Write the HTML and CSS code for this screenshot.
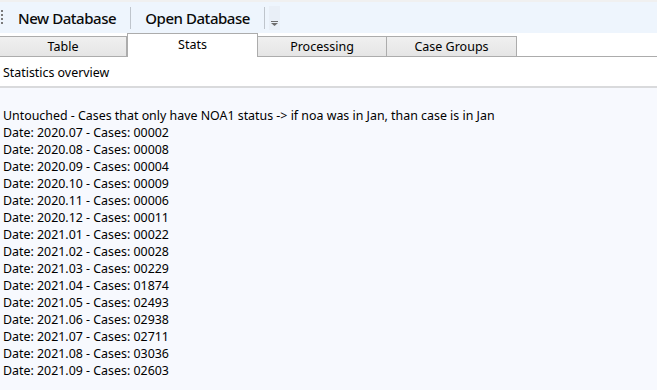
FILE: index.html
```html
<!DOCTYPE html>
<html lang="en">
<head>
    <meta charset="UTF-8">
    <title>Case Statistics</title>
    <link rel="stylesheet" href="styles.css">
</head>
<body>
    <div class="window">
        <div class="top-strip"></div>
        <div class="toolbar">
            <span class="grip"></span>
            <button class="tool-btn">New Database</button>
            <span class="tool-sep"></span>
            <button class="tool-btn">Open Database</button>
            <span class="tool-sep"></span>
            <span class="overflow">
                <svg width="7" height="5" viewBox="0 0 7 5"><rect x="0" y="0" width="7" height="1" fill="#6d6d6d"/><path d="M0 2h7L3.5 5z" fill="#6d6d6d"/></svg>
            </span>
        </div>

        <div class="tabs">
            <div class="tab">Table</div>
            <div class="tab active">Stats</div>
            <div class="tab">Processing</div>
            <div class="tab">Case Groups</div>
            <div class="tab-fill"></div>
        </div>

        <div class="panel-head">Statistics overview</div>

        <div class="stats" id="stats"></div>
    </div>

    <script>
        // Months with case counts, rendered as plain lines
        const rows = [
            ['2020.07', '00002'], ['2020.08', '00008'], ['2020.09', '00004'],
            ['2020.10', '00009'], ['2020.11', '00006'], ['2020.12', '00011'],
            ['2021.01', '00022'], ['2021.02', '00028'], ['2021.03', '00229'],
            ['2021.04', '01874'], ['2021.05', '02493'], ['2021.06', '02938'],
            ['2021.07', '02711'], ['2021.08', '03036'], ['2021.09', '02603']
        ];
        const stats = document.getElementById('stats');
        const lines = ['Untouched - Cases that only have NOA1 status -> if noa was in Jan, than case is in Jan'];
        rows.forEach(r => lines.push(`Date: ${r[0]} - Cases: ${r[1]}`));
        lines.forEach(text => {
            const div = document.createElement('div');
            div.className = 'stat-line';
            div.textContent = text;
            stats.appendChild(div);
        });
    </script>
</body>
</html>
```

FILE: styles.css
```css
body {
    margin: 0;
    font-family: "Noto Sans", "Open Sans", sans-serif;
    color: #000;
    background: #f7f9fe;
}
.window {
    width: 657px;
    height: 390px;
    display: flex;
    flex-direction: column;
    overflow: hidden;
}
.top-strip {
    height: 2px;
    background: #f0f0f0;
}
.toolbar {
    height: 31px;
    background: #eef5fd;
    display: flex;
    align-items: center;
}
.grip {
    width: 2px;
    height: 16px;
    margin: 0 6px 0 1px;
    background: repeating-linear-gradient(to bottom, #7a7a7a 0 2px, transparent 2px 4px);
}
.tool-btn {
    font-family: inherit;
    font-size: 15px;
    font-weight: 500;
    letter-spacing: -0.45px;
    color: #0a0a0a;
    background: none;
    border: none;
    padding: 0 10px 0 9px;
    height: 25px;
}
.tool-sep {
    width: 1px;
    height: 22px;
    background: #bfc5cc;
    margin: 0 5px 0 4px;
}
.overflow {
    width: 11px;
    height: 24px;
    display: flex;
    align-items: flex-end;
    justify-content: center;
    padding-bottom: 4px;
    box-sizing: border-box;
    background: #e9eff7;
    margin-left: -1px;
}
.tabs {
    height: 24px;
    display: flex;
    align-items: flex-end;
    background: #fff;
}
.tab {
    width: 130px;
    height: 21px;
    box-sizing: border-box;
    border: 1px solid #acacac;
    border-left-width: 0;
    background: linear-gradient(#f0f0f0, #e5e5e5);
    font-size: 12.5px;
    line-height: 20px;
    text-align: center;
    color: #000;
}
.tab:first-child {
    width: 127px;
}
.tab.active {
    height: 24px;
    width: 131px;
    border-left-width: 1px;
    border-bottom: none;
    background: #fff;
    line-height: 22px;
    margin-right: -1px;
    position: relative;
}
.tab.active + .tab {
    border-left-width: 1px;
}
.tab-fill {
    flex: 1;
    height: 1px;
    background: #acacac;
}
.panel-head {
    height: 29px;
    background: #fff;
    border-bottom: 2px solid #d9dadc;
    font-size: 12.4px;
    line-height: 32px;
    padding-left: 3px;
}
.stats {
    padding: 19px 3px 0;
    font-size: 12.4px;
    line-height: 17px;
}
```
